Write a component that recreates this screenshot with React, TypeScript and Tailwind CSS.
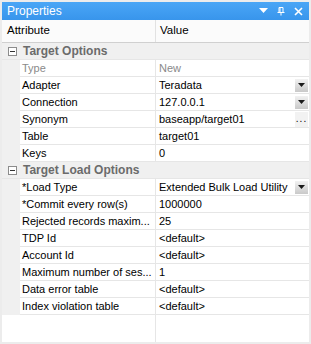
import React from "react";

type Row =
  | { kind: "cat"; label: string }
  | { kind: "prop"; label: string; value: string; readOnly?: boolean; button?: "drop" | "dots" };

const rows: Row[] = [
  { kind: "cat", label: "Target Options" },
  { kind: "prop", label: "Type", value: "New", readOnly: true },
  { kind: "prop", label: "Adapter", value: "Teradata", button: "drop" },
  { kind: "prop", label: "Connection", value: "127.0.0.1", button: "drop" },
  { kind: "prop", label: "Synonym", value: "baseapp/target01", button: "dots" },
  { kind: "prop", label: "Table", value: "target01" },
  { kind: "prop", label: "Keys", value: "0" },
  { kind: "cat", label: "Target Load Options" },
  { kind: "prop", label: "*Load Type", value: "Extended Bulk Load Utility", button: "drop" },
  { kind: "prop", label: "*Commit every row(s)", value: "1000000" },
  { kind: "prop", label: "Rejected records maxim...", value: "25" },
  { kind: "prop", label: "TDP Id", value: "<default>" },
  { kind: "prop", label: "Account Id", value: "<default>" },
  { kind: "prop", label: "Maximum number of ses...", value: "1" },
  { kind: "prop", label: "Data error table", value: "<default>" },
  { kind: "prop", label: "Index violation table", value: "<default>" },
];

function DropButton() {
  return (
    <div className="flex h-[13px] w-[13px] items-center justify-center bg-gradient-to-b from-[#f2f2f2] to-[#c9c9c9]">
      <svg width="7" height="4" viewBox="0 0 7 4">
        <path d="M0 0h7L3.5 4z" fill="#1a1a1a" />
      </svg>
    </div>
  );
}

function CollapseBox() {
  return (
    <svg width="9" height="9" viewBox="0 0 9 9" className="shrink-0">
      <rect x="0.5" y="0.5" width="8" height="8" fill="#fff" stroke="#8c8c8c" />
      <path d="M2 4.5h5" stroke="#333" />
    </svg>
  );
}

export default function App() {
  return (
    <div
      className="flex h-[344px] w-[311px] flex-col border-2 border-[#ececec] bg-white text-[11px] text-black"
      style={{ fontFamily: "Tahoma, 'Liberation Sans', Arial, sans-serif" }}
    >
      <div className="flex h-[18px] items-center justify-between bg-gradient-to-b from-[#4aa6f6] to-[#3895ec] pl-[5px] pr-[6px] text-white">
        <span className="text-[12px]">Properties</span>
        <div className="flex items-center gap-[9px]">
          <svg width="9" height="6" viewBox="0 0 9 6">
            <path d="M0 0h9L4.5 5z" fill="#fff" />
          </svg>
          <svg width="8" height="9" viewBox="0 0 8 9">
            <path d="M2 0.5h4v5M2 0.5v5M3 0.5v5M0.5 5.5h7M4 5.5v3" stroke="#fff" fill="none" />
          </svg>
          <svg width="9" height="9" viewBox="0 0 9 9">
            <path d="M1 1l7 7M8 1l-7 7" stroke="#fff" strokeWidth="1.6" />
          </svg>
        </div>
      </div>

      <div className="flex h-[23px] items-center border-b border-[#d0d0d0] bg-[#fbfbfb] text-[11.5px]">
        <div className="flex h-full w-[154px] items-center border-r border-[#e2e2e2] pl-[5px]">Attribute</div>
        <div className="pl-[4px]">Value</div>
      </div>

      <div className="flex flex-1 flex-col">
        {rows.map((r, i) =>
          r.kind === "cat" ? (
            <div key={i} className="flex h-[17px] items-center gap-[5px] border-b border-[#e6e6e6] bg-[#f0f0f0] pl-[6px]">
              <CollapseBox />
              <span className="pl-[1px] text-[12px] font-bold text-[#6b6b6b]">{r.label}</span>
            </div>
          ) : (
            <div key={i} className="flex h-[17px] bg-[#f0f0f0] pl-[18px]">
              <div
                className={`flex w-[136px] items-center whitespace-nowrap border-b border-r border-[#e6e6e6] bg-white pl-[2px] ${
                  r.readOnly ? "text-[#8a8a8a]" : ""
                }`}
              >
                {r.label}
              </div>
              <div
                className={`flex flex-1 items-center justify-between whitespace-nowrap border-b border-[#e6e6e6] bg-white pl-[3px] pr-[1px] ${
                  r.readOnly ? "text-[#8a8a8a]" : ""
                }`}
              >
                <span>{r.value}</span>
                {r.button === "drop" && <DropButton />}
                {r.button === "dots" && (
                  <div className="flex h-[15px] w-[13px] items-end justify-center bg-[#f2f2f2] pb-[3px] text-[10px] leading-none tracking-[1px]">
                    ...
                  </div>
                )}
              </div>
            </div>
          )
        )}
        <div className="flex flex-1">
          <div className="w-[154px] border-r border-[#e6e6e6]" />
          <div className="flex-1" />
        </div>
      </div>
    </div>
  );
}
